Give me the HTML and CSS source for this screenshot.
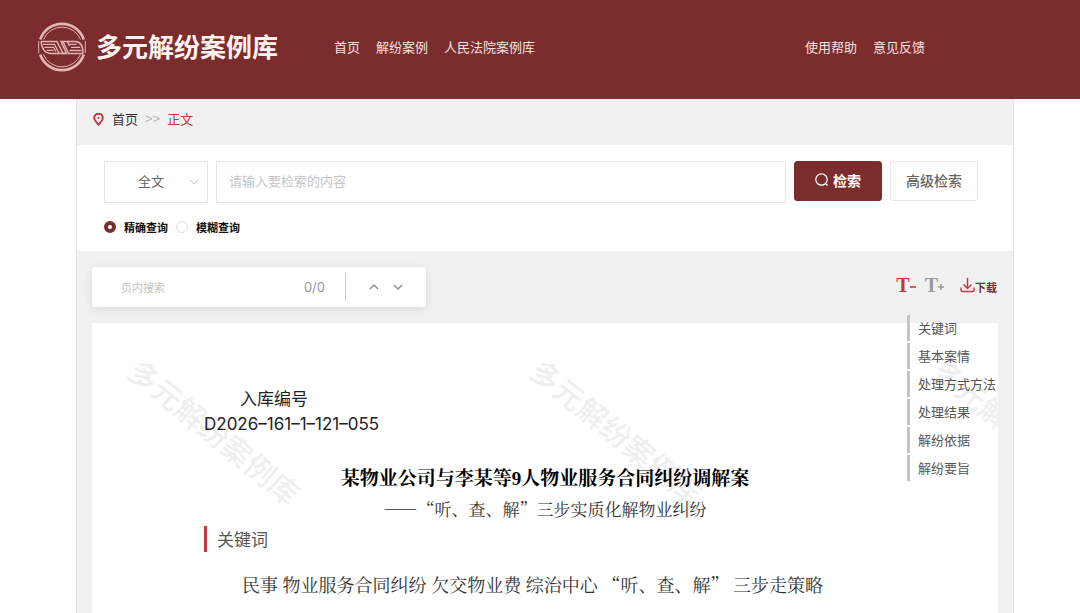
FILE: index.html
```html
<!DOCTYPE html>
<html lang="zh-CN">
<head>
    <meta charset="UTF-8">
    <meta name="viewport" content="width=device-width, initial-scale=1.0">
    <title>多元解纷案例库</title>
    <link rel="stylesheet" href="styles.css">
</head>
<body>
    <header class="header">
        <a class="logo" href="#">
            <svg class="logo-icon" viewBox="0 0 50 50" fill="none" stroke="currentColor">
                <path d="M3.200 17.500a23 23 0 0 1 43.600 0M3.200 32.500a23 23 0 0 0 43.600 0" stroke-width="2.600"/>
                <path d="M6.500 17.500a20 20 0 0 1 37 0M6.500 32.500a20 20 0 0 0 37 0" stroke-width="1"/>
                <path d="M1.700 19v12M48.300 19v12" stroke-width="1"/>
                <path d="M4 19.500h16l6 12h3.500l-5.500-12h6.500l2 4.500" stroke-width="1.500"/>
                <path d="M46 31.500H31.500L26 19.500M20 31.500h-6c-5.500 0-9-4-10-12M20 31.500h8" stroke-width="1.500"/>
                <path d="M30 19.500h8c5 0 8 4 8 12" stroke-width="1.500"/>
                <path d="M6 22.300h11.500l4.500 9M7.500 25.300h9l2.500 4.500M10 28.300h6.500M32.500 22.300h7M34 25.300h9M32.500 28.500h12" stroke-width="1.300"/>
            </svg>
            <span class="logo-text">多元解纷案例库</span>
        </a>
        <nav class="nav">
            <a href="#">首页</a>
            <a href="#">解纷案例</a>
            <a href="#">人民法院案例库</a>
        </nav>
        <nav class="nav nav-right">
            <a href="#">使用帮助</a>
            <a href="#">意见反馈</a>
        </nav>
    </header>

    <main class="main">
        <div class="breadcrumb">
            <svg class="pin" viewBox="0 0 10 12" fill="none" stroke="currentColor">
                <path d="M5 10.800C3.500 8.600 1 7 1 4.600a4 4 0 0 1 8 0C9 7 6.500 8.600 5 10.800z" stroke-width="1.800"/>
                <circle cx="5" cy="4.600" r="1" fill="currentColor" stroke="none"/>
            </svg>
            <a href="#">首页</a>
            <span class="sep">&gt;&gt;</span>
            <span class="current">正文</span>
        </div>

        <!-- 检索 -->
        <form class="search">
            <div class="search-row">
                <div class="select-box">
                    <select class="select" aria-label="检索范围">
                        <option>全文</option>
                    </select>
                    <svg class="select-arrow" viewBox="0 0 10 6" fill="none" stroke="currentColor"><path d="M1 1l4 4 4-4"/></svg>
                </div>
                <input class="search-input" type="text" placeholder="请输入要检索的内容" aria-label="检索内容">
                <div class="search-buttons">
                    <button class="btn btn-primary" type="button">
                        <svg class="btn-icon" viewBox="0 0 14 14" fill="none" stroke="currentColor" stroke-width="1.200">
                            <circle cx="6.500" cy="6.500" r="5.700"/>
                            <path d="M10.500 10.500l2 2"/>
                        </svg>
                        检索
                    </button>
                    <button class="btn" type="button">高级检索</button>
                </div>
            </div>
            <div class="radio-row">
                <label class="radio"><input type="radio" name="mode" checked>精确查询</label>
                <label class="radio"><input type="radio" name="mode">模糊查询</label>
            </div>
        </form>

        <div class="content">
            <div class="toolbar">
                <div class="page-search">
                    <input class="page-input" type="text" placeholder="页内搜索" aria-label="页内搜索">
                    <span class="count">0/0</span>
                    <div class="arrows">
                        <button type="button" aria-label="上一个"><svg viewBox="0 0 10 6" fill="none" stroke="currentColor" stroke-width="1.300"><path d="M1 5l4-4 4 4"/></svg></button>
                        <button type="button" aria-label="下一个"><svg viewBox="0 0 10 6" fill="none" stroke="currentColor" stroke-width="1.300"><path d="M1 1l4 4 4-4"/></svg></button>
                    </div>
                </div>
                <div class="tools">
                    <button class="font-btn font-minus" type="button" aria-label="缩小字号">T<svg viewBox="0 0 6 6" stroke="currentColor" stroke-width="1.500"><path d="M0 3h6"/></svg></button>
                    <button class="font-btn" type="button" aria-label="放大字号">T<svg viewBox="0 0 6 6" stroke="currentColor" stroke-width="1.500"><path d="M0 3h6M3 0v6"/></svg></button>
                    <button class="download" type="button">
                        <svg viewBox="0 0 15 15" fill="none" stroke="currentColor" stroke-width="1.400">
                            <path d="M7.500 0v10M3.500 6.500l4 4 4-4M1 9.500v2.500q0 1.500 1.500 1.500h10q1.500 0 1.500-1.500V9.500"/>
                        </svg>
                        <span>下载</span>
                    </button>
                </div>
            </div>

            <div class="card">
                <div class="watermark" aria-hidden="true">
                    <span>多元解纷案例库</span>
                    <span>多元解纷案例库</span>
                    <span>多元解纷案例库</span>
                </div>
                <article class="article">
                    <div class="number">
                        <p class="number-label">入库编号</p>
                        <p>D2026–161–1–121–055</p>
                    </div>
                    <h1 class="title">某物业公司与李某等9人物业服务合同纠纷调解案</h1>
                    <p class="subtitle">——“听、查、解”三步实质化解物业纠纷</p>
                    <h2 class="section-title">关键词</h2>
                    <p class="keywords">民事 物业服务合同纠纷 欠交物业费 综治中心 “听、查、解” 三步走策略</p>
                </article>
            </div>

            <!-- 目录 -->
            <nav class="toc">
                <a href="#">关键词</a>
                <a href="#">基本案情</a>
                <a href="#">处理方式方法</a>
                <a href="#">处理结果</a>
                <a href="#">解纷依据</a>
                <a href="#">解纷要旨</a>
            </nav>
        </div>
    </main>
</body>
</html>
```
FILE: styles.css
```css
:root {
    --primary: #7b2c2c;
    --red: #c0393b;
    --gray-bg: #f1f1f1;
    --border: #e6e6e6;
    --text: #333;
    --serif: "Noto Serif CJK SC", "Noto Sans CJK SC", serif;
}

* {
    box-sizing: border-box;
}

body {
    margin: 0;
    min-height: 100vh;
    display: flex;
    flex-direction: column;
    background: #fff;
    color: var(--text);
    font-family: "Noto Sans CJK SC", sans-serif;
    font-size: 13px;
    line-height: 20px;
}

a {
    color: inherit;
    text-decoration: none;
}

button,
input,
select {
    font-family: inherit;
    margin: 0;
}

button {
    padding: 0;
    border: none;
    background: none;
    cursor: pointer;
}

p, h1, h2 {
    margin: 0;
    font-weight: normal;
}

.header {
    display: flex;
    align-items: center;
    height: 99px;
    padding: 0 155px 6px 37px;
    background: var(--primary);
    color: #f6e3e1;
}

.logo {
    display: flex;
    align-items: center;
    gap: 9px;
}

.logo-icon {
    width: 50px;
    height: 50px;
    color: #e3b5b2;
}

.logo-text {
    padding-bottom: 2px;
    font-size: 26px;
    line-height: 36px;
    font-weight: bold;
    color: #fff3f1;
}

.nav {
    display: flex;
    gap: 16px;
    margin-left: 56px;
}

.nav-right {
    margin-left: auto;
}

.main {
    flex: 1;
    display: flex;
    flex-direction: column;
    margin: 0 66px 0 76px;
    border: 1px solid #e4e4e4;
    border-width: 0 1px;
}

.breadcrumb {
    display: flex;
    align-items: center;
    height: 46px;
    padding: 0 16px 6px;
    background: var(--gray-bg);
}

.pin {
    width: 11px;
    height: 13px;
    margin-right: 8px;
    color: var(--red);
}

.sep {
    margin: 0 7px;
    color: #b5b5b5;
    font-family: "Liberation Sans", sans-serif;
}

.current {
    color: var(--red);
}

.search {
    padding: 16px 35px 14px 27px;
}

.search-row {
    display: flex;
    gap: 8px;
}

.select-box {
    position: relative;
    width: 104px;
}

.select {
    width: 100%;
    height: 42px;
    padding: 0 0 3px 33px;
    border: 1px solid var(--border);
    border-radius: 0;
    background: #fff;
    color: #666;
    font-size: 13px;
    appearance: none;
}

.select-arrow {
    position: absolute;
    top: 18px;
    right: 9px;
    width: 10px;
    height: 6px;
    color: #c4c4c4;
}

.search-input {
    flex: 1;
    min-width: 0;
    height: 42px;
    padding: 0 12px 3px;
    border: 1px solid var(--border);
    font-size: 13px;
}

.search-input::placeholder,
.page-input::placeholder {
    color: #c4c4c4;
}

.search-buttons {
    display: flex;
    gap: 8px;
}

.btn {
    display: flex;
    align-items: center;
    justify-content: center;
    gap: 4px;
    width: 88px;
    height: 40px;
    padding-bottom: 2px;
    border: 1px solid var(--border);
    border-radius: 3px;
    color: #666;
    font-size: 14px;
    font-weight: 500;
}

.btn-primary {
    border-color: var(--primary);
    background: var(--primary);
    color: #fff;
    font-weight: bold;
}

.btn-icon {
    width: 14px;
    height: 14px;
}

.radio-row {
    display: flex;
    gap: 8px;
    margin-top: 14px;
}

.radio {
    display: flex;
    align-items: center;
    gap: 8px;
    color: #111;
    font-size: 11px;
    font-weight: bold;
}

.radio input {
    width: 12px;
    height: 12px;
    border: 1px solid #ddd;
    border-radius: 50%;
    background: #fff;
    appearance: none;
}

.radio input:checked {
    border: 4px solid var(--primary);
}

.content {
    position: relative;
    flex: 1;
    display: flex;
    flex-direction: column;
    padding: 16px 15px 0;
    background: var(--gray-bg);
}

.toolbar {
    display: flex;
    justify-content: space-between;
}

.page-search {
    display: flex;
    align-items: center;
    width: 334px;
    height: 40px;
    padding: 0 23px 0 29px;
    border-radius: 3px;
    background: #fff;
    box-shadow: 0 2px 8px rgba(0, 0, 0, 0.1);
}

.page-input {
    flex: 1;
    min-width: 0;
    padding: 0;
    border: none;
    font-size: 11px;
}

.count {
    padding-right: 20px;
    color: #999;
    font-family: Inter, sans-serif;
    font-size: 13px;
}

.arrows {
    display: flex;
    align-items: center;
    gap: 14px;
    height: 28px;
    padding-left: 23px;
    border-left: 1px solid #ccc;
}

.arrows button,
.arrows svg {
    display: block;
    width: 10px;
    height: 6px;
    color: #888;
}

.tools {
    display: flex;
    align-items: center;
    height: 36px;
    padding-right: 1px;
}

.font-btn {
    display: flex;
    align-items: center;
    margin-right: 9px;
    color: #999;
    font-family: "Liberation Serif", serif;
    font-size: 20px;
    font-weight: bold;
    line-height: 20px;
}

.font-btn svg {
    width: 6px;
    height: 6px;
    margin-top: 4px;
}

.font-minus {
    color: var(--red);
}

.download {
    display: flex;
    align-items: center;
    margin-left: 7px;
    color: var(--red);
}

.download svg {
    width: 15px;
    height: 15px;
}

.download span {
    padding-top: 4px;
    color: var(--primary);
    font-size: 11px;
    font-weight: bold;
    line-height: 16px;
}

.card {
    position: relative;
    flex: 1;
    margin-top: 16px;
    padding: 64px 112px 0;
    overflow: hidden;
    background: #fff;
}

.watermark {
    position: absolute;
    top: 88px;
    left: -78px;
    display: flex;
}

.watermark span {
    width: 402px;
    flex-shrink: 0;
    color: rgba(0, 0, 0, 0.06);
    font-size: 30px;
    font-weight: bold;
    line-height: 40px;
    text-align: center;
    transform: rotate(39deg);
}

.article {
    position: relative;
}

.number {
    color: #222;
    font-family: Inter, "Noto Sans CJK SC", sans-serif;
    font-size: 17px;
    line-height: 25px;
}

.number-label {
    padding-left: 36px;
}

.title {
    margin-top: 26px;
    color: #000;
    font-family: "Liberation Serif", var(--serif);
    font-size: 19px;
    font-weight: bold;
    line-height: 32px;
    text-align: center;
}

.subtitle {
    font-family: var(--serif);
    font-size: 17px;
    line-height: 28px;
    text-align: center;
}

.section-title {
    margin-top: 3px;
    padding-left: 10px;
    border-left: 3px solid var(--red);
    color: #555;
    font-size: 17px;
    line-height: 26px;
}

.keywords {
    margin-top: 18px;
    padding-left: 38px;
    font-family: var(--serif);
    font-size: 18px;
    line-height: 28px;
}

.toc {
    position: absolute;
    top: 64px;
    right: 17px;
    display: flex;
    flex-direction: column;
    gap: 2px;
    color: #555;
}

.toc a {
    padding-left: 8px;
    border-left: 3px solid #c4c4c4;
    line-height: 26px;
}
```
